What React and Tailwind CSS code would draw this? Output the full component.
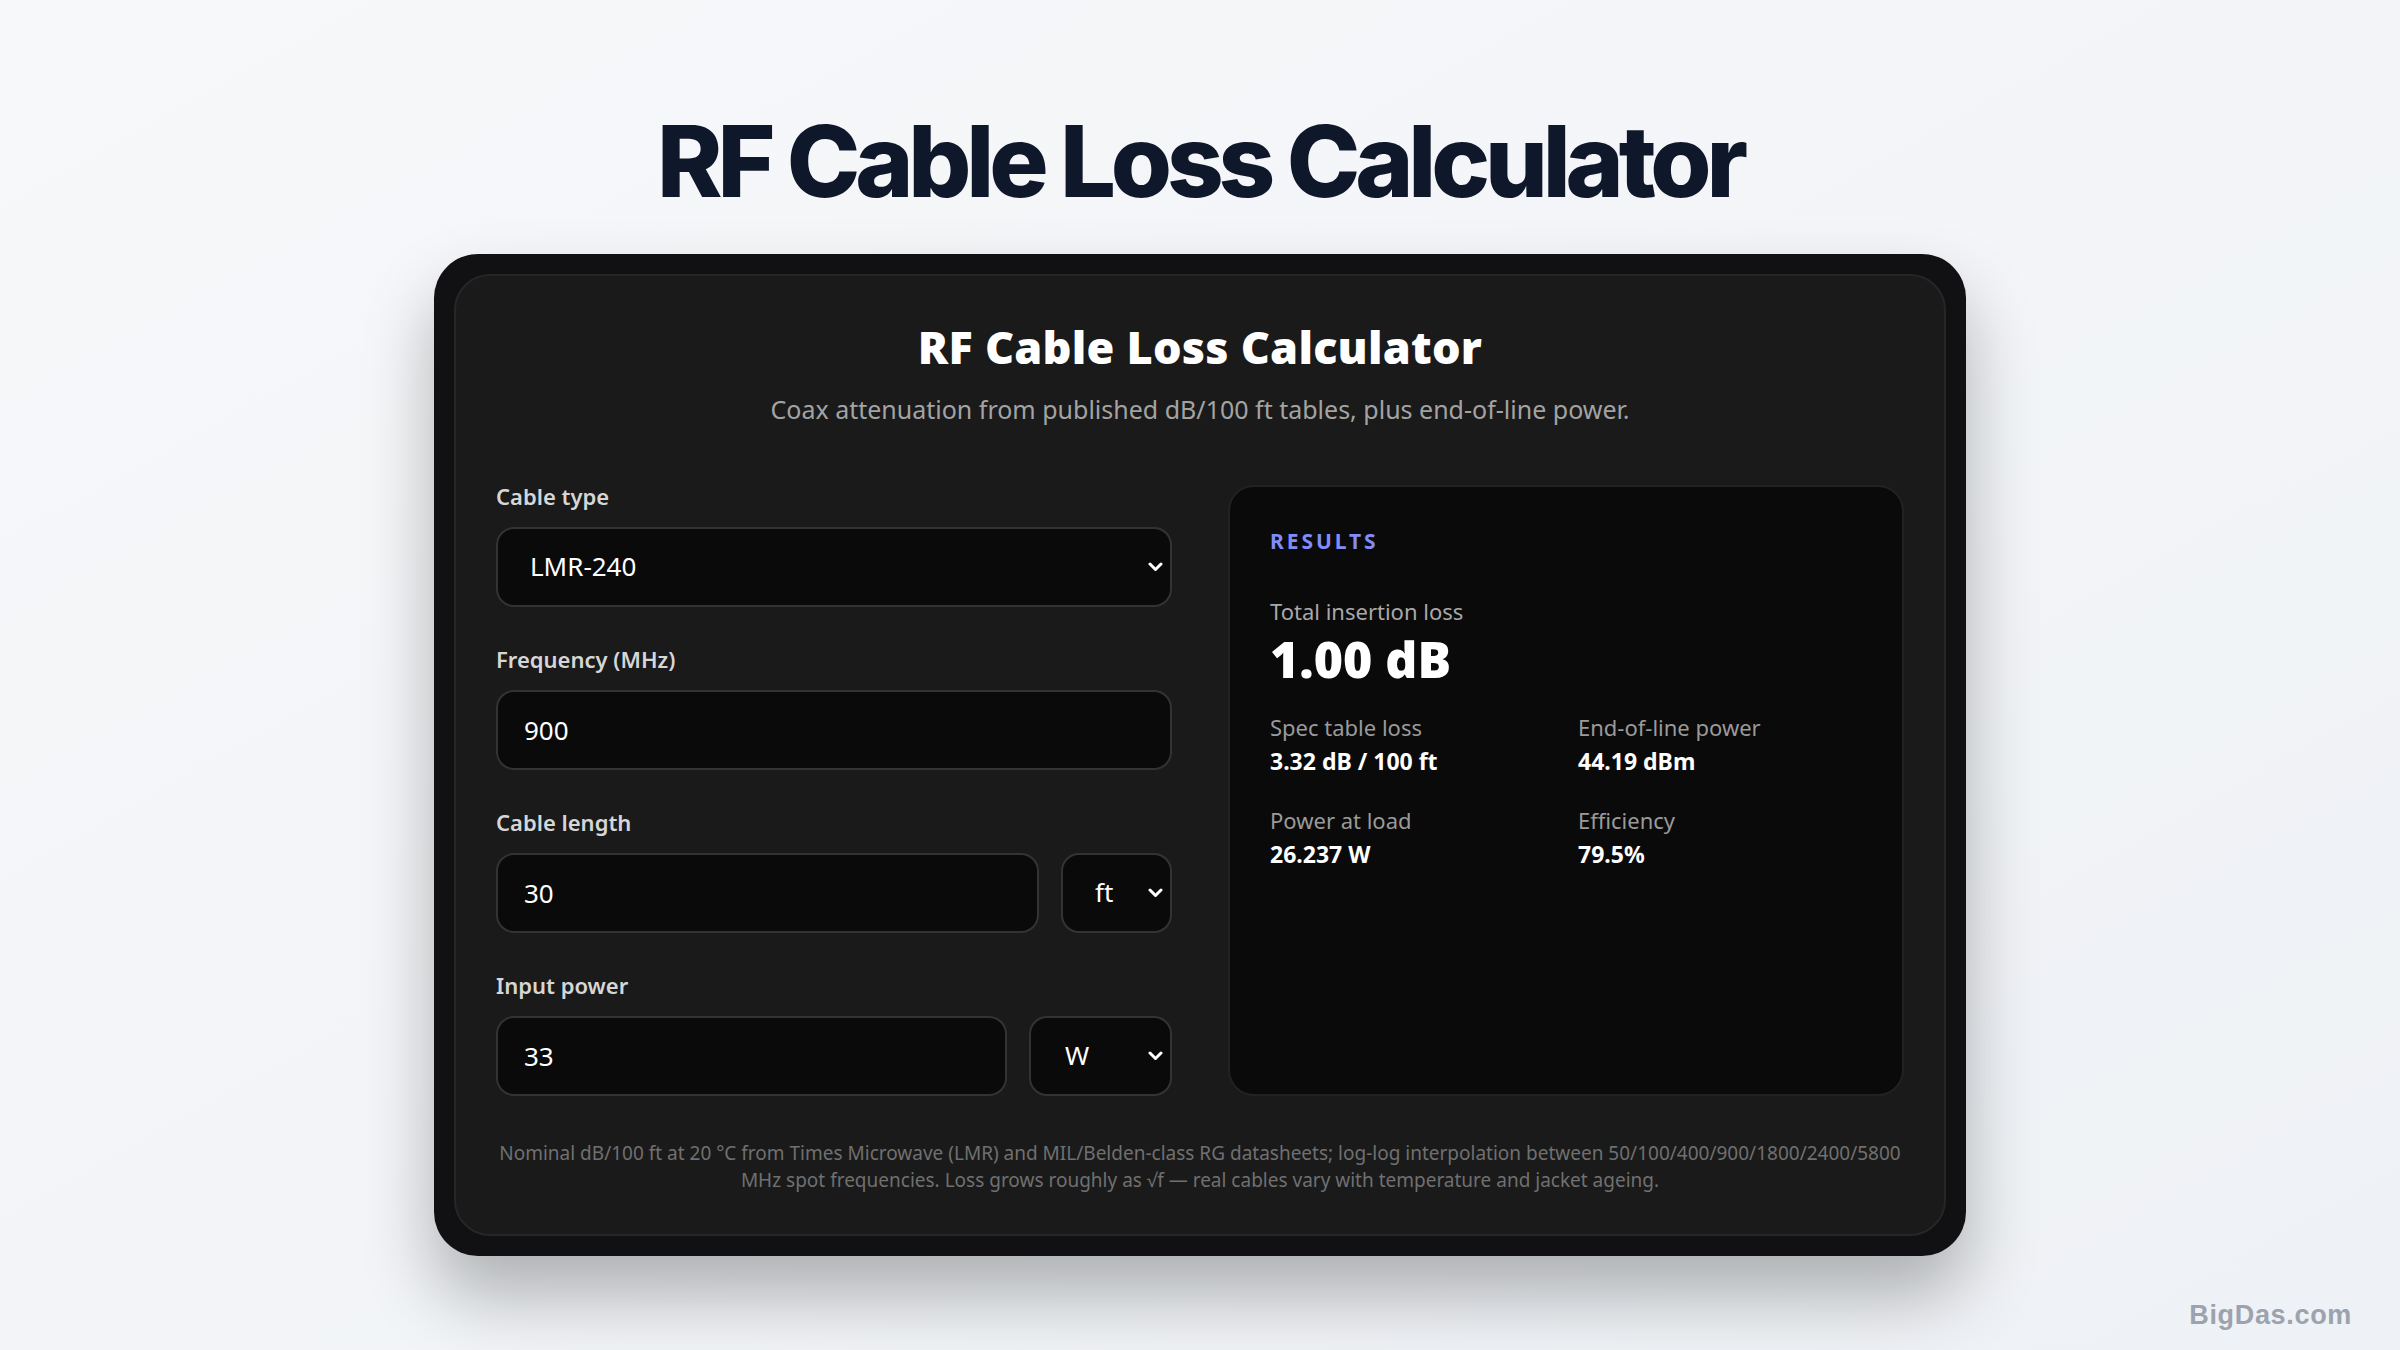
import React from 'react';

const sans = "font-['Noto_Sans',_'Open_Sans',_sans-serif]";

const Chevron = () => (
  <svg
    className="pointer-events-none absolute right-[9px] top-1/2 -translate-y-1/2 w-[15px] h-[10px]"
    viewBox="0 0 15 10"
    fill="none"
    stroke="white"
    strokeWidth="3"
    strokeLinecap="round"
    strokeLinejoin="round"
  >
    <path d="M2 2 L7.5 7.5 L13 2" />
  </svg>
);

const Field = ({ label, children }) => (
  <div className="flex flex-col">
    <label className="text-[22px] font-semibold text-[#d6d6d6] mb-[20px] leading-none">{label}</label>
    {children}
  </div>
);

const Select = ({ value, className = '', textClass = '' }) => (
  <div className={`relative ${className}`}>
    <select
      defaultValue={value}
      className={`w-full h-[80px] appearance-none rounded-[18px] border-2 border-[#333333] bg-[#0a0a0a] text-white text-[26px] outline-none ${textClass}`}
    >
      <option>{value}</option>
    </select>
    <Chevron />
  </div>
);

const Input = ({ value, className = '' }) => (
  <input
    defaultValue={value}
    className={`h-[80px] rounded-[18px] border-2 border-[#333333] bg-[#0a0a0a] px-[26px] text-white text-[26px] outline-none ${className}`}
  />
);

const Stat = ({ label, value }) => (
  <div className="flex flex-col">
    <span className="text-[22px] text-[#9a9a9a] leading-tight">{label}</span>
    <span className="text-[23px] font-bold text-white leading-tight mt-[6px]">{value}</span>
  </div>
);

export default function App() {
  return (
    <div className={`relative min-h-screen w-full bg-gradient-to-br from-[#f7f8fa] to-[#eef1f5] flex flex-col items-center ${sans}`}>
      <h1 className="mt-[112px] font-['Inter',_sans-serif] text-[99px] font-extrabold tracking-[-0.052em] leading-none text-[#0f172a]">
        RF Cable Loss Calculator
      </h1>

      <div className="mt-[43px] w-[1532px] rounded-[44px] bg-[#111113] p-[20px] shadow-[0_40px_70px_rgba(0,0,0,0.28)]">
        <div className="rounded-[36px] border-2 border-[#262626] bg-[#1a1a1a] px-[40px] pt-[48px] pb-[40px]">
          <h2 className="text-center text-[45px] font-black text-white leading-none tracking-[0.005em]">RF Cable Loss Calculator</h2>
          <p className="mt-[22px] text-center text-[25px] text-[#a3a3a3]">
            Coax attenuation from published dB/100 ft tables, plus end-of-line power.
          </p>

          <div className="mt-[56px] grid grid-cols-2 gap-[56px]">
            <div className="flex flex-col gap-[41px]">
              <Field label="Cable type">
                <Select value="LMR-240" textClass="pl-[32px]" />
              </Field>
              <Field label="Frequency (MHz)">
                <Input value="900" className="w-full" />
              </Field>
              <Field label="Cable length">
                <div className="flex gap-[22px]">
                  <Input value="30" className="flex-1 min-w-0" />
                  <Select value="ft" className="w-[111px] shrink-0" textClass="pl-[32px]" />
                </div>
              </Field>
              <Field label="Input power">
                <div className="flex gap-[22px]">
                  <Input value="33" className="flex-1 min-w-0" />
                  <Select value="W" className="w-[143px] shrink-0" textClass="pl-[34px]" />
                </div>
              </Field>
            </div>

            <div className="rounded-[26px] border-2 border-[#222222] bg-[#0a0a0a] px-[40px] pt-[44px] pb-[40px]">
              <div className="text-[21px] font-bold tracking-[0.14em] text-[#818cf8] leading-none">RESULTS</div>
              <div className="mt-[48px] text-[22px] text-[#a8a8a8] leading-none">Total insertion loss</div>
              <div className="mt-[12px] text-[50px] font-black text-white leading-none">1.00 dB</div>
              <div className="mt-[30px] grid grid-cols-2 gap-x-[24px] gap-y-[31px]">
                <Stat label="Spec table loss" value="3.32 dB / 100 ft" />
                <Stat label="End-of-line power" value="44.19 dBm" />
                <Stat label="Power at load" value="26.237 W" />
                <Stat label="Efficiency" value="79.5%" />
              </div>
            </div>
          </div>

          <p className="mt-[44px] text-center text-[19px] leading-[27px] text-[#707070] px-[2px]">
            Nominal dB/100 ft at 20 °C from Times Microwave (LMR) and MIL/Belden-class RG datasheets; log-log interpolation between 50/100/400/900/1800/2400/5800 MHz spot frequencies. Loss grows roughly as √f — real cables vary with temperature and jacket ageing.
          </p>
        </div>
      </div>

      <div className="absolute right-[48px] bottom-[15px] font-['Liberation_Sans',_Arial,_sans-serif] text-[27px] font-bold text-[#9ca3af] tracking-wide">
        BigDas.com
      </div>
    </div>
  );
}
